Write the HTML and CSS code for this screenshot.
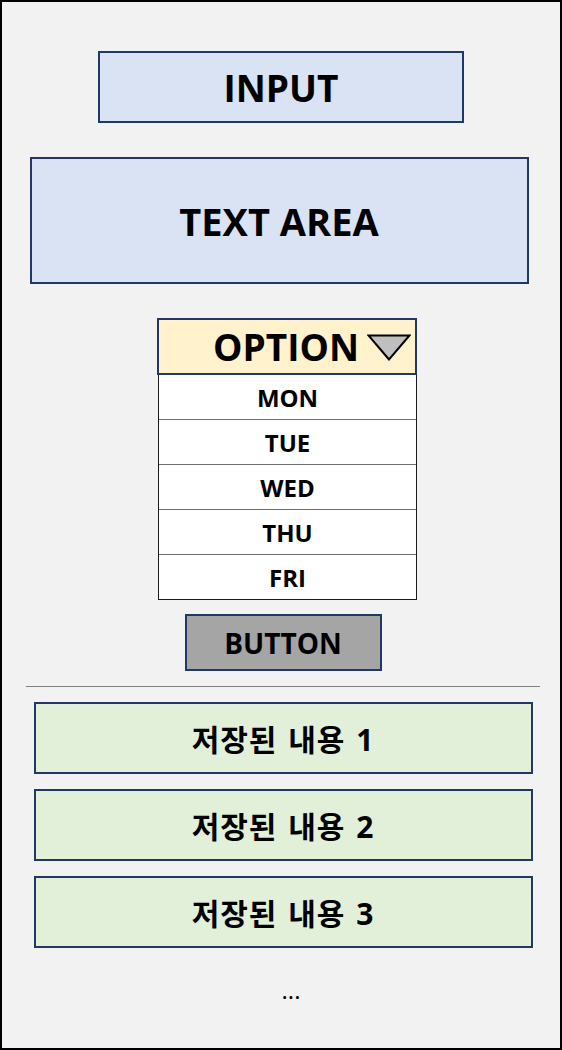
FILE: index.html
```html
<!DOCTYPE html>
<html lang="ko">
<head>
<meta charset="utf-8">
<title>UI Sketch</title>
<link rel="stylesheet" href="styles.css">
</head>
<body>
<div class="frame">
  <div class="box input-box">INPUT</div>
  <div class="box textarea-box">TEXT AREA</div>
  <div class="select">
    <div class="select-head">
      <span class="select-label">OPTION</span>
      <svg class="caret" width="44" height="27" viewBox="0 0 44 27" aria-hidden="true">
        <polygon points="1.5,1.5 42.5,1.5 22,25.5" fill="#bfbfbf" stroke="#000" stroke-width="2" stroke-linejoin="miter"/>
      </svg>
    </div>
    <ul class="select-list">
      <li class="select-item">MON</li>
      <li class="select-item">TUE</li>
      <li class="select-item">WED</li>
      <li class="select-item">THU</li>
      <li class="select-item">FRI</li>
    </ul>
  </div>
  <div class="box button-box">BUTTON</div>
  <div class="divider"></div>
  <div class="saved-list">
    <div class="box saved-item">저장된 내용 1</div>
    <div class="box saved-item">저장된 내용 2</div>
    <div class="box saved-item">저장된 내용 3</div>
  </div>
  <div class="more">...</div>
</div>
</body>
</html>
```

FILE: styles.css
```css
* {
  box-sizing: border-box;
}

html, body {
  margin: 0;
  padding: 0;
}

body {
  font-family: "Open Sans", "Noto Sans CJK KR", sans-serif;
  font-weight: 700;
  color: #000;
}

.frame {
  width: 562px;
  height: 1050px;
  border: 2px solid #000;
  background: #f2f2f2;
  display: flex;
  flex-direction: column;
  align-items: center;
}

.box {
  display: flex;
  align-items: center;
  justify-content: center;
  border: 2px solid #1f3864;
}

.input-box {
  margin-top: 49px;
  width: 366px;
  height: 72px;
  background: #dae3f3;
  font-size: 37px;
}

.textarea-box {
  margin-top: 34px;
  margin-right: 4px;
  width: 499px;
  height: 127px;
  background: #dae3f3;
  font-size: 38px;
}

.select {
  margin-top: 34px;
  width: 260px;
  margin-left: 12px;
}

.select-head {
  height: 57px;
  border: 2px solid #1f3864;
  background: #fff2cc;
  display: flex;
  align-items: center;
  justify-content: flex-end;
  gap: 8px;
  padding-right: 4px;
}

.select-label {
  font-size: 37px;
  line-height: 1;
}

.caret {
  display: block;
  margin-top: 2px;
}

.select-list {
  list-style: none;
  margin: 0 0 0 1px;
  padding: 0;
  border: 1px solid #1a1a1a;
  border-top: none;
  background: #fff;
}

.select-item {
  height: 45px;
  display: flex;
  align-items: center;
  justify-content: center;
  font-size: 24px;
  border-top: 1px solid #6f6f6f;
}

.select-item:first-child {
  border-top: none;
  height: 44px;
}

.button-box {
  margin-top: 14px;
  margin-left: 4px;
  width: 197px;
  height: 57px;
  background: #a5a5a5;
  font-size: 28px;
}

.divider {
  margin-top: 15px;
  margin-left: 4px;
  width: 514px;
  height: 1px;
  background: #808080;
}

.saved-list {
  margin-top: 15px;
  margin-left: 4px;
  display: flex;
  flex-direction: column;
  gap: 15px;
}

.saved-item {
  width: 499px;
  height: 72px;
  background: #e2f0d9;
  font-size: 30px;
  letter-spacing: 1px;
  word-spacing: 2px;
}

.more {
  margin-top: 30px;
  margin-left: 20px;
  font-size: 24px;
  line-height: 1;
  font-weight: 400;
}
```
